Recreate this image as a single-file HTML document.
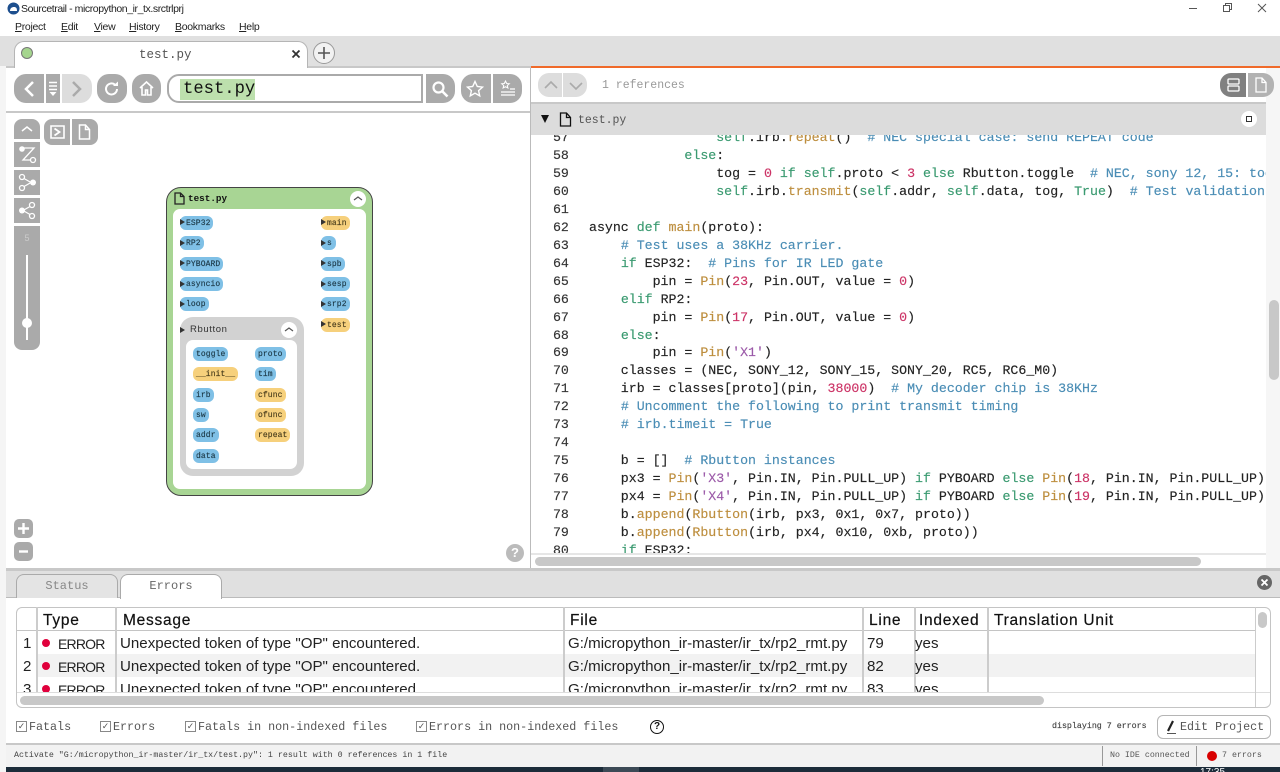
<!DOCTYPE html>
<html><head><meta charset="utf-8"><style>
html,body{margin:0;padding:0;width:1280px;height:772px;overflow:hidden;background:#fff}
body{position:relative;font-family:"Liberation Sans",sans-serif;color:#222}
.a{position:absolute}
.m{font-family:"Liberation Mono",monospace}
.b{position:absolute;background:#aaa}
.n{position:absolute;height:14px;border-radius:6px;font:8px/15px "Liberation Mono",monospace;letter-spacing:.1px;color:#1d3a48;-webkit-text-stroke:.15px #1d3a48;white-space:pre;padding-left:6px;box-sizing:border-box}
.bl{background:#7fc0e6}.ye{background:#f6d07c;color:#4a3e1d;-webkit-text-stroke:.15px #4a3e1d}
.t{position:absolute;width:0;height:0;border-left:5px solid #333;border-top:3px solid transparent;border-bottom:3px solid transparent}
.l{position:absolute;left:545px;width:730px;height:18px;font:13.26px/18px "Liberation Mono",monospace;white-space:pre;color:#222;-webkit-text-stroke:.15px currentColor}
.l i{font-style:normal;display:inline-block;width:44px;color:#333}
.k{color:#3a9a70}.f{color:#bd8e3e}.d{color:#cc3366}.c{color:#4a8db5}.s{color:#9b59a8}
.h{position:absolute;top:611px;font:15.5px/20px "Liberation Sans",sans-serif;letter-spacing:.75px;color:#111;-webkit-text-stroke:.2px #111}
.r{position:absolute;font:15.1px/20px "Liberation Sans",sans-serif;color:#222;white-space:pre}
.e{font-size:14px;letter-spacing:-.8px}
.fl{position:absolute;top:719px;font:11.7px/16px "Liberation Mono",monospace;color:#555;white-space:pre}
.cb{position:absolute;top:721px;width:9px;height:9px;border:1px solid #888;font:9px/9px "Liberation Sans",sans-serif;color:#555;text-align:center}
.v{position:absolute;top:607px;height:85px;width:2px;background:#ccc}
.mn{position:absolute;top:20px;font-size:10.5px;line-height:14px;color:#222;letter-spacing:-.3px}
</style></head><body>
<!-- title -->
<svg class="a" style="left:7px;top:2px" width="13" height="13" viewBox="0 0 13 13"><circle cx="6.5" cy="6.5" r="6" fill="#1d4f8e"/><path d="M3 9c0-3 2-4 4-4s3 1 3 4z" fill="#fff"/></svg>
<div class="a" style="left:21px;top:2px;font-size:10.5px;line-height:14px;color:#222;letter-spacing:-.42px">Sourcetrail - micropython_ir_tx.srctrlprj</div>
<div class="mn" style="left:15px"><u>P</u>roject</div>
<div class="mn" style="left:61px"><u>E</u>dit</div>
<div class="mn" style="left:94px"><u>V</u>iew</div>
<div class="mn" style="left:129px"><u>H</u>istory</div>
<div class="mn" style="left:175px"><u>B</u>ookmarks</div>
<div class="mn" style="left:239px"><u>H</u>elp</div>
<svg class="a" style="left:1185px;top:0" width="95" height="16" viewBox="0 0 95 16" fill="none" stroke="#555"><path d="M4 8.500h8"/><path d="M38.500 5.500h6v6h-6zM40.500 5.500v-2h6v6h-2"/><path d="M73 4l8 8M81 4l-8 8"/></svg>
<!-- tab strip -->
<div class="a" style="left:0;top:36px;width:1280px;height:30px;background:#e0e0e0"></div>
<div class="a" style="left:0;top:66px;width:6px;height:706px;background:#f5f5f5"></div>
<div class="a" style="left:1266px;top:68px;width:14px;height:500px;background:#f6f6f6"></div>
<div class="a" style="left:14px;top:41px;width:294px;height:26px;background:#fff;border:1px solid #b5b5b5;border-bottom:0;border-radius:10px 10px 0 0;box-sizing:border-box"></div>
<div class="a" style="left:21px;top:47px;width:10px;height:10px;background:#a5d58e;border:1px solid #777;border-radius:50%"></div>
<div class="a m" style="left:139px;top:47px;font-size:12.500px;line-height:16px;color:#555">test.py</div>
<svg class="a" style="left:291px;top:49px" width="10" height="10" viewBox="0 0 10 10"><path d="M1.500 1.500l7 7M8.500 1.500l-7 7" stroke="#333" stroke-width="1.800"/></svg>
<div class="a" style="left:313px;top:42px;width:20px;height:20px;background:#f2f2f2;border:1px solid #999;border-radius:50%"></div>
<svg class="a" style="left:317px;top:46px" width="14" height="14" viewBox="0 0 14 14"><path d="M7 1v12M1 7h12" stroke="#555" stroke-width="1.600"/></svg>
<div class="a" style="left:6px;top:66px;width:1260px;height:2px;background:#c8c8c8"></div>
<div class="a" style="left:14px;top:66px;width:294px;height:2px;background:#fff;border-left:1px solid #b5b5b5;border-right:1px solid #b5b5b5;box-sizing:border-box"></div>
<div class="a" style="left:531px;top:66px;width:749px;height:2px;background:#f06a2a"></div>
<!-- nav -->
<div class="b" style="left:14px;top:74px;width:30px;height:29px;border-radius:12px 0 0 12px"></div>
<svg class="a" style="left:22px;top:80px" width="14" height="18" viewBox="0 0 14 18"><path d="M11 2L4 9l7 7" fill="none" stroke="#fff" stroke-width="2.500"/></svg>
<div class="b" style="left:46px;top:74px;width:14px;height:29px"></div>
<svg class="a" style="left:48px;top:81px" width="10" height="16" viewBox="0 0 10 16"><path d="M1 1.500h8M1 5h8M1 8.500h8" stroke="#fff" stroke-width="1.500"/><path d="M1.500 11h7L5 15z" fill="#fff"/></svg>
<div class="b" style="left:62px;top:74px;width:30px;height:29px;background:#ddd;border-radius:0 12px 12px 0"></div>
<svg class="a" style="left:70px;top:80px" width="14" height="18" viewBox="0 0 14 18"><path d="M3 2l7 7-7 7" fill="none" stroke="#aaa" stroke-width="2.500"/></svg>
<div class="b" style="left:97px;top:74px;width:30px;height:29px;border-radius:12px"></div>
<svg class="a" style="left:103px;top:80px" width="18" height="18" viewBox="0 0 18 18"><path d="M14 9a5.500 5.500 0 1 1-2-4.300" fill="none" stroke="#fff" stroke-width="2"/><path d="M10 6l5 0 0-4.500z" fill="#fff"/></svg>
<div class="b" style="left:132px;top:74px;width:29px;height:29px;border-radius:12px"></div>
<svg class="a" style="left:138px;top:80px" width="17" height="17" viewBox="0 0 17 17"><path d="M2 8l6.500-6L15 8M4 7v8h3.500v-5h2v5H13V7" fill="none" stroke="#fff" stroke-width="1.600"/></svg>
<div class="a" style="left:167px;top:74px;width:256px;height:29px;border:2px solid #aaa;border-radius:12px 0 0 12px;box-sizing:border-box;background:#fff"></div>
<div class="a m" style="left:180px;top:79px;width:75px;height:21px;background:#bde0ad;font-size:17.200px;line-height:22px;color:#111;text-indent:3px">test.py</div>
<div class="b" style="left:426px;top:74px;width:29px;height:29px;border-radius:0 12px 12px 0"></div>
<svg class="a" style="left:431px;top:80px" width="18" height="18" viewBox="0 0 18 18"><circle cx="7.500" cy="7.500" r="5" fill="none" stroke="#fff" stroke-width="2.200"/><path d="M11 11l5.500 5.500" stroke="#fff" stroke-width="2.600"/></svg>
<div class="b" style="left:461px;top:74px;width:30px;height:29px;border-radius:12px 0 0 12px"></div>
<svg class="a" style="left:466px;top:80px" width="18" height="18" viewBox="0 0 18 18"><path d="M9 1.500l2.300 5 5.200.6-3.900 3.500 1.100 5.300L9 13.200l-4.700 2.700 1.100-5.300L1.500 7.100l5.200-.6z" fill="none" stroke="#fff" stroke-width="1.400"/></svg>
<div class="b" style="left:493px;top:74px;width:29px;height:29px;border-radius:0 12px 12px 0"></div>
<svg class="a" style="left:499px;top:80px" width="18" height="18" viewBox="0 0 18 18"><path d="M6.500 1l1.200 2.500 2.600.3-2 1.700.6 2.500-2.400-1.300-2.400 1.300.6-2.500-2-1.700 2.600-.3z" fill="none" stroke="#fff"/><path d="M11 9h5M2 12h14M2 15h14" stroke="#fff" stroke-width="1.300"/></svg>
<div class="a" style="left:6px;top:111px;width:524px;height:2px;background:#c8c8c8"></div>
<div class="a" style="left:530px;top:68px;width:1px;height:500px;background:#bbb"></div>
<!-- left toolbar -->
<div class="b" style="left:14px;top:119px;width:26px;height:20px;border-radius:8px 8px 0 0"></div>
<svg class="a" style="left:20px;top:124px" width="14" height="9" viewBox="0 0 14 9"><path d="M2 7l5-4 5 4" fill="none" stroke="#fff" stroke-width="1.500"/></svg>
<div class="b" style="left:14px;top:142px;width:26px;height:25px"></div>
<svg class="a" style="left:14px;top:142px" width="26" height="25" viewBox="0 0 26 25"><circle cx="8" cy="7" r="2.800" fill="#fff"/><path d="M10 6h10L9 18h7" fill="none" stroke="#fff" stroke-width="1.300"/><circle cx="19" cy="18" r="2.500" fill="none" stroke="#fff" stroke-width="1.300"/></svg>
<div class="b" style="left:14px;top:170px;width:26px;height:25px"></div>
<svg class="a" style="left:14px;top:170px" width="26" height="25" viewBox="0 0 26 25"><circle cx="8" cy="7" r="2.500" fill="none" stroke="#fff" stroke-width="1.300"/><circle cx="8" cy="18" r="2.500" fill="none" stroke="#fff" stroke-width="1.300"/><circle cx="19" cy="12.500" r="3" fill="#fff"/><path d="M10 8.500l7 4-7 4" fill="none" stroke="#fff" stroke-width="1.200"/></svg>
<div class="b" style="left:14px;top:198px;width:26px;height:25px"></div>
<svg class="a" style="left:14px;top:198px" width="26" height="25" viewBox="0 0 26 25"><circle cx="18" cy="7" r="2.500" fill="none" stroke="#fff" stroke-width="1.300"/><circle cx="18" cy="18" r="2.500" fill="none" stroke="#fff" stroke-width="1.300"/><circle cx="8" cy="12.500" r="3" fill="#fff"/><path d="M16 8.500l-7 4 7 4" fill="none" stroke="#fff" stroke-width="1.200"/></svg>
<div class="b" style="left:14px;top:226px;width:26px;height:124px;border-radius:0 0 8px 8px"></div>
<div class="a" style="left:14px;top:233px;width:26px;text-align:center;font-size:9px;line-height:10px;color:#ccc">5</div>
<div class="a" style="left:26px;top:255px;width:2px;height:85px;background:#fff"></div>
<div class="a" style="left:22px;top:318px;width:10px;height:10px;background:#fff;border-radius:50%"></div>
<div class="b" style="left:44px;top:119px;width:26px;height:26px;border-radius:8px 0 0 8px"></div>
<svg class="a" style="left:50px;top:125px" width="15" height="14" viewBox="0 0 15 14"><path d="M1 1h13v12H1z" fill="none" stroke="#fff" stroke-width="1.600"/><path d="M4.500 3.500L9.500 7l-5 3.500" fill="none" stroke="#fff" stroke-width="1.800"/></svg>
<div class="b" style="left:72px;top:119px;width:26px;height:26px;border-radius:0 8px 8px 0"></div>
<svg class="a" style="left:78px;top:124px" width="13" height="16" viewBox="0 0 13 16"><path d="M1.500 1h6l4 4.500V15h-10z M7.500 1v4.500h4" fill="none" stroke="#fff" stroke-width="1.500"/></svg>
<div class="b" style="left:14px;top:519px;width:19px;height:19px;border-radius:5px"></div>
<svg class="a" style="left:14px;top:519px" width="19" height="19"><path d="M4 9.500h11M9.500 4v11" stroke="#fff" stroke-width="2.400"/></svg>
<div class="b" style="left:14px;top:542px;width:19px;height:19px;border-radius:5px"></div>
<svg class="a" style="left:14px;top:542px" width="19" height="19"><path d="M5 9.500h9" stroke="#fff" stroke-width="2.400"/></svg>
<div class="a" style="left:506px;top:544px;width:18px;height:18px;background:#bbb;border-radius:50%;color:#fff;font:bold 13px/18px 'Liberation Sans',sans-serif;text-align:center">?</div>
<!-- graph -->
<div class="a" style="left:166px;top:187px;width:207px;height:309px;box-sizing:border-box;background:#a8d594;border:1.500px solid #444;border-radius:15px"></div>
<svg class="a" style="left:174px;top:192px" width="11" height="13" viewBox="0 0 11 13"><path d="M1 1h5.500L10 4.500V12H1z M6.500 1v3.500H10" fill="none" stroke="#222" stroke-width="1.300"/></svg>
<div class="a m" style="left:188px;top:192px;font-size:9.300px;line-height:14px;font-weight:bold;color:#111">test.py</div>
<div class="a" style="left:350px;top:191px;width:16px;height:16px;background:#fff;border-radius:50%"></div>
<svg class="a" style="left:353px;top:195px" width="10" height="7"><path d="M1 5l4-3 4 3" fill="none" stroke="#555" stroke-width="1.200"/></svg>
<div class="a" style="left:173px;top:209px;width:193px;height:280px;background:#fff;border-radius:7px"></div>
<div class="n bl" style="left:180px;top:216px;width:33px">ESP32</div><div class="t" style="left:180px;top:219px"></div>
<div class="n bl" style="left:180px;top:236px;width:24px">RP2</div><div class="t" style="left:180px;top:240px"></div>
<div class="n bl" style="left:180px;top:257px;width:43px">PYBOARD</div><div class="t" style="left:180px;top:260px"></div>
<div class="n bl" style="left:180px;top:277px;width:43px">asyncio</div><div class="t" style="left:180px;top:281px"></div>
<div class="n bl" style="left:180px;top:297px;width:29px">loop</div><div class="t" style="left:180px;top:301px"></div>
<div class="n ye" style="left:321px;top:216px;width:29px">main</div><div class="t" style="left:321px;top:219px"></div>
<div class="n bl" style="left:321px;top:236px;width:15px">s</div><div class="t" style="left:321px;top:240px"></div>
<div class="n bl" style="left:321px;top:257px;width:24px">spb</div><div class="t" style="left:321px;top:260px"></div>
<div class="n bl" style="left:321px;top:277px;width:29px">sesp</div><div class="t" style="left:321px;top:281px"></div>
<div class="n bl" style="left:321px;top:297px;width:29px">srp2</div><div class="t" style="left:321px;top:301px"></div>
<div class="n ye" style="left:321px;top:318px;width:29px">test</div><div class="t" style="left:321px;top:321px"></div>
<div class="a" style="left:180px;top:317px;width:124px;height:159px;background:#d2d2d2;border-radius:13px"></div>
<div class="t" style="left:180px;top:327px"></div>
<div class="a" style="left:190px;top:323px;font-size:9.500px;line-height:14px;letter-spacing:.6px;color:#333">Rbutton</div>
<div class="a" style="left:281px;top:322px;width:16px;height:16px;background:#fff;border-radius:50%"></div>
<svg class="a" style="left:284px;top:326px" width="10" height="7"><path d="M1 5l4-3 4 3" fill="none" stroke="#555" stroke-width="1.200"/></svg>
<div class="a" style="left:186px;top:340px;width:111px;height:129px;background:#fff;border-radius:7px"></div>
<div class="n bl" style="left:193px;top:347px;width:35px;padding-left:3px">toggle</div>
<div class="n bl" style="left:255px;top:347px;width:31px;padding-left:3px">proto</div>
<div class="n ye" style="left:193px;top:367px;width:45px;padding-left:3px">__init__</div>
<div class="n bl" style="left:255px;top:367px;width:21px;padding-left:3px">tim</div>
<div class="n bl" style="left:193px;top:388px;width:21px;padding-left:3px">irb</div>
<div class="n ye" style="left:255px;top:388px;width:31px;padding-left:3px">cfunc</div>
<div class="n bl" style="left:193px;top:408px;width:16px;padding-left:3px">sw</div>
<div class="n ye" style="left:255px;top:408px;width:31px;padding-left:3px">ofunc</div>
<div class="n bl" style="left:193px;top:428px;width:26px;padding-left:3px">addr</div>
<div class="n ye" style="left:255px;top:428px;width:35px;padding-left:3px">repeat</div>
<div class="n bl" style="left:193px;top:449px;width:26px;padding-left:3px">data</div>
<!-- right header -->
<div class="a" style="left:538px;top:73px;width:24px;height:24px;background:#ddd;border-radius:11px 0 0 11px"></div>
<div class="a" style="left:563px;top:73px;width:24px;height:24px;background:#ddd;border-radius:0 11px 11px 0"></div>
<svg class="a" style="left:538px;top:73px" width="50" height="24" fill="none" stroke="#aaa" stroke-width="1.600"><path d="M7 15l6-6 6 6M32 10l6 6 6-6"/></svg>
<div class="a m" style="left:602px;top:78px;font-size:11.500px;line-height:16px;color:#999">1 references</div>
<div class="a" style="left:1220px;top:73px;width:26px;height:24px;background:#808080;border-radius:11px 0 0 11px"></div>
<div class="a" style="left:1248px;top:73px;width:26px;height:24px;background:#b2b2b2;border-radius:0 11px 11px 0"></div>
<svg class="a" style="left:1226px;top:77px" width="16" height="16" fill="none" stroke="#fff" stroke-width="1.300"><rect x="2" y="2" width="11" height="5" rx="1"/><rect x="2" y="9" width="11" height="5" rx="1"/></svg>
<svg class="a" style="left:1254px;top:77px" width="14" height="16" viewBox="0 0 14 16" fill="none" stroke="#fff" stroke-width="1.300"><path d="M2 1h6l4 4.500V15H2z M8 1v4.500h4"/></svg>
<div class="a" style="left:531px;top:102px;width:735px;height:2px;background:#c8c8c8"></div>
<div class="a" style="left:531px;top:104px;width:735px;height:31px;background:#dcdcdc"></div>
<div class="a" style="left:541px;top:115px;width:0;height:0;border-left:4.500px solid transparent;border-right:4.500px solid transparent;border-top:8px solid #111"></div>
<svg class="a" style="left:559px;top:112px" width="13" height="15" viewBox="0 0 13 15"><path d="M1.500 1h6l4 4.500V14h-10z M7.500 1v4.500h4" fill="none" stroke="#111" stroke-width="1.300"/></svg>
<div class="a m" style="left:578px;top:113px;font-size:11.500px;line-height:15px;color:#555">test.py</div>
<div class="a" style="left:1241px;top:111px;width:16px;height:16px;background:#fff;border-radius:50%"></div>
<div class="a" style="left:1246px;top:116px;width:4px;height:4px;border:1.500px solid #333"></div>
<!-- code -->
<div class="a" style="left:531px;top:135px;width:735px;height:420px;overflow:hidden">
<div style="position:absolute;left:-531px;top:-135px;width:1280px;height:772px">
<div class="l" style="top:129.050px"><i> 57</i>                <span class="k">self</span>.irb.<span class="f">repeat</span>()  <span class="c"># NEC special case: send REPEAT code</span></div>
<div class="l" style="top:147px"><i> 58</i>            <span class="k">else</span>:</div>
<div class="l" style="top:164.950px"><i> 59</i>                tog = <span class="d">0</span> <span class="k">if</span> <span class="k">self</span>.proto &lt; <span class="d">3</span> <span class="k">else</span> Rbutton.toggle  <span class="c"># NEC, sony 12, 15: toggle</span></div>
<div class="l" style="top:182.900px"><i> 60</i>                <span class="k">self</span>.irb.<span class="f">transmit</span>(<span class="k">self</span>.addr, <span class="k">self</span>.data, tog, <span class="k">True</span>)  <span class="c"># Test validation</span></div>
<div class="l" style="top:200.850px"><i> 61</i></div>
<div class="l" style="top:218.800px"><i> 62</i>async <span class="k">def</span> <span class="f">main</span>(proto):</div>
<div class="l" style="top:236.750px"><i> 63</i>    <span class="c"># Test uses a 38KHz carrier.</span></div>
<div class="l" style="top:254.700px"><i> 64</i>    <span class="k">if</span> ESP32:  <span class="c"># Pins for IR LED gate</span></div>
<div class="l" style="top:272.650px"><i> 65</i>        pin = <span class="f">Pin</span>(<span class="d">23</span>, Pin.OUT, value = <span class="d">0</span>)</div>
<div class="l" style="top:290.600px"><i> 66</i>    <span class="k">elif</span> RP2:</div>
<div class="l" style="top:308.550px"><i> 67</i>        pin = <span class="f">Pin</span>(<span class="d">17</span>, Pin.OUT, value = <span class="d">0</span>)</div>
<div class="l" style="top:326.500px"><i> 68</i>    <span class="k">else</span>:</div>
<div class="l" style="top:344.450px"><i> 69</i>        pin = <span class="f">Pin</span>(<span class="s">'X1'</span>)</div>
<div class="l" style="top:362.400px"><i> 70</i>    classes = (NEC, SONY_12, SONY_15, SONY_20, RC5, RC6_M0)</div>
<div class="l" style="top:380.350px"><i> 71</i>    irb = classes[proto](pin, <span class="d">38000</span>)  <span class="c"># My decoder chip is 38KHz</span></div>
<div class="l" style="top:398.300px"><i> 72</i>    <span class="c"># Uncomment the following to print transmit timing</span></div>
<div class="l" style="top:416.250px"><i> 73</i>    <span class="c"># irb.timeit = True</span></div>
<div class="l" style="top:434.200px"><i> 74</i></div>
<div class="l" style="top:452.150px"><i> 75</i>    b = []  <span class="c"># Rbutton instances</span></div>
<div class="l" style="top:470.100px"><i> 76</i>    px3 = <span class="f">Pin</span>(<span class="s">'X3'</span>, Pin.IN, Pin.PULL_UP) <span class="k">if</span> PYBOARD <span class="k">else</span> <span class="f">Pin</span>(<span class="d">18</span>, Pin.IN, Pin.PULL_UP)</div>
<div class="l" style="top:488.050px"><i> 77</i>    px4 = <span class="f">Pin</span>(<span class="s">'X4'</span>, Pin.IN, Pin.PULL_UP) <span class="k">if</span> PYBOARD <span class="k">else</span> <span class="f">Pin</span>(<span class="d">19</span>, Pin.IN, Pin.PULL_UP)</div>
<div class="l" style="top:506px"><i> 78</i>    b.<span class="f">append</span>(<span class="f">Rbutton</span>(irb, px3, 0x1, 0x7, proto))</div>
<div class="l" style="top:523.950px"><i> 79</i>    b.<span class="f">append</span>(<span class="f">Rbutton</span>(irb, px4, 0x10, 0xb, proto))</div>
<div class="l" style="top:541.900px"><i> 80</i>    <span class="k">if</span> ESP32:</div>
</div></div>
<div class="a" style="left:531px;top:553px;width:735px;height:2px;background:#e6e6e6"></div>
<div class="a" style="left:535px;top:557px;width:666px;height:9px;background:#c8c8c8;border-radius:5px"></div>
<div class="a" style="left:1269px;top:300px;width:10px;height:80px;background:#c8c8c8;border-radius:5px"></div>
<!-- bottom -->
<div class="a" style="left:6px;top:568px;width:1274px;height:3px;background:#c8c8c8"></div>
<div class="a" style="left:6px;top:571px;width:1274px;height:26px;background:#e0e0e0;border-bottom:1px solid #bbb;box-sizing:content-box"></div>
<div class="a" style="left:16px;top:574px;width:102px;height:24px;box-sizing:border-box;background:#e4e4e4;border:1px solid #aaa;border-bottom:0;border-radius:8px 8px 0 0;text-align:center;font:12px/23px 'Liberation Mono',monospace;color:#888">Status</div>
<div class="a" style="left:120px;top:574px;width:102px;height:25px;box-sizing:border-box;background:#fff;border:1px solid #aaa;border-bottom:0;border-radius:8px 8px 0 0;text-align:center;font:12px/23px 'Liberation Mono',monospace;color:#666">Errors</div>
<div class="a" style="left:1257px;top:575px;width:15px;height:15px;background:#666;border-radius:50%"></div>
<svg class="a" style="left:1257px;top:575px" width="15" height="15"><path d="M4.500 4.500l6 6M10.500 4.500l-6 6" stroke="#fff" stroke-width="1.800"/></svg>
<!-- table -->
<div class="a" style="left:16px;top:607px;width:1255px;height:101px;box-sizing:border-box;border:1px solid #c4c4c4;border-radius:6px;background:#fff"></div>
<div class="a" style="left:37px;top:654px;width:1218px;height:23px;background:#f2f2f2"></div>
<div class="a" style="left:17px;top:630px;width:1238px;height:1px;background:#c4c4c4"></div>
<div class="a" style="left:17px;top:692px;width:1253px;height:1px;background:#ddd"></div>
<div class="v" style="left:36px"></div><div class="v" style="left:115px"></div><div class="v" style="left:563px"></div><div class="v" style="left:862px"></div><div class="v" style="left:914px"></div><div class="v" style="left:987px"></div>
<div class="a" style="left:1255px;top:607px;width:1px;height:100px;background:#ccc"></div>
<div class="h" style="left:43px">Type</div><div class="h" style="left:123px">Message</div><div class="h" style="left:570px">File</div><div class="h" style="left:869px">Line</div><div class="h" style="left:919px">Indexed</div><div class="h" style="left:994px">Translation Unit</div>
<div class="a" style="left:1258px;top:612px;width:9px;height:16px;background:#c8c8c8;border-radius:5px"></div>
<div class="a" style="left:16px;top:631px;width:1239px;height:61px;overflow:hidden">
<div style="position:absolute;left:-16px;top:-631px;width:1280px;height:772px">
<div class="r" style="left:23px;top:634px">1</div><div class="r" style="left:23px;top:657px">2</div><div class="r" style="left:23px;top:680px">3</div>
<div class="a" style="left:42px;top:639px;width:8px;height:8px;background:#e0003c;border-radius:50%"></div>
<div class="a" style="left:42px;top:662px;width:8px;height:8px;background:#e0003c;border-radius:50%"></div>
<div class="a" style="left:42px;top:685px;width:8px;height:8px;background:#e0003c;border-radius:50%"></div>
<div class="r e" style="left:58px;top:634px">ERROR</div><div class="r e" style="left:58px;top:657px">ERROR</div><div class="r e" style="left:58px;top:680px">ERROR</div>
<div class="r" style="left:120px;top:634px">Unexpected token of type "OP" encountered.</div><div class="r" style="left:120px;top:657px">Unexpected token of type "OP" encountered.</div><div class="r" style="left:120px;top:680px">Unexpected token of type "OP" encountered.</div>
<div class="r" style="left:568px;top:634px">G:/micropython_ir-master/ir_tx/rp2_rmt.py</div><div class="r" style="left:568px;top:657px">G:/micropython_ir-master/ir_tx/rp2_rmt.py</div><div class="r" style="left:568px;top:680px">G:/micropython_ir-master/ir_tx/rp2_rmt.py</div>
<div class="r" style="left:867px;top:634px">79</div><div class="r" style="left:867px;top:657px">82</div><div class="r" style="left:867px;top:680px">83</div>
<div class="r" style="left:915px;top:634px">yes</div><div class="r" style="left:915px;top:657px">yes</div><div class="r" style="left:915px;top:680px">yes</div>
</div></div>
<div class="a" style="left:20px;top:696px;width:1024px;height:9px;background:#c8c8c8;border-radius:5px"></div>
<!-- filters -->
<div class="cb" style="left:16px">✓</div><div class="fl" style="left:29px">Fatals</div>
<div class="cb" style="left:100px">✓</div><div class="fl" style="left:113px">Errors</div>
<div class="cb" style="left:185px">✓</div><div class="fl" style="left:198px">Fatals in non-indexed files</div>
<div class="cb" style="left:416px">✓</div><div class="fl" style="left:429px">Errors in non-indexed files</div>
<div class="a" style="left:650px;top:720px;width:12px;height:12px;border:1.500px solid #111;border-radius:50%;font:bold 10px/12px 'Liberation Sans',sans-serif;text-align:center;color:#111">?</div>
<div class="a m" style="left:1052px;top:721px;font-size:8.300px;line-height:12px;color:#444;-webkit-text-stroke:.15px #444">displaying 7 errors</div>
<div class="a" style="left:1157px;top:715px;width:114px;height:24px;box-sizing:border-box;border:1px solid #b5b5b5;border-radius:6px;background:#fff"></div>
<svg class="a" style="left:1164px;top:718px" width="14" height="18" viewBox="0 0 14 18"><path d="M9 3L4 13" stroke="#222" stroke-width="2.200"/><path d="M3 15.500h9" stroke="#555"/></svg>
<div class="a m" style="left:1180px;top:719px;font-size:11.700px;line-height:16px;color:#555">Edit Project</div>
<!-- status -->
<div class="a" style="left:6px;top:743px;width:1274px;height:2px;background:#c8c8c8"></div>
<div class="a" style="left:6px;top:745px;width:1274px;height:22px;background:#f2f2f2"></div>
<div class="a m" style="left:14px;top:750px;font-size:8.300px;line-height:12px;color:#444">Activate "G:/micropython_ir-master/ir_tx/test.py": 1 result with 0 references in 1 file</div>
<div class="a" style="left:1102px;top:746px;width:1px;height:20px;background:#999"></div>
<div class="a" style="left:1196px;top:746px;width:1px;height:20px;background:#999"></div>
<div class="a m" style="left:1110px;top:750px;font-size:8.300px;line-height:12px;color:#555">No IDE connected</div>
<div class="a" style="left:1207px;top:751px;width:10px;height:10px;background:#d80000;border-radius:50%"></div>
<div class="a m" style="left:1222px;top:750px;font-size:8.300px;line-height:12px;color:#555">7 errors</div>
<div class="a" style="left:6px;top:767px;width:1274px;height:5px;background:#1c2c3a"></div>
<div class="a" style="left:603px;top:767px;width:36px;height:5px;background:#3c4a56"></div>
<div class="a" style="left:1200px;top:767px;width:30px;height:5px;overflow:hidden;color:#fff;font-size:10px;line-height:11px">17:35</div>
</body></html>
